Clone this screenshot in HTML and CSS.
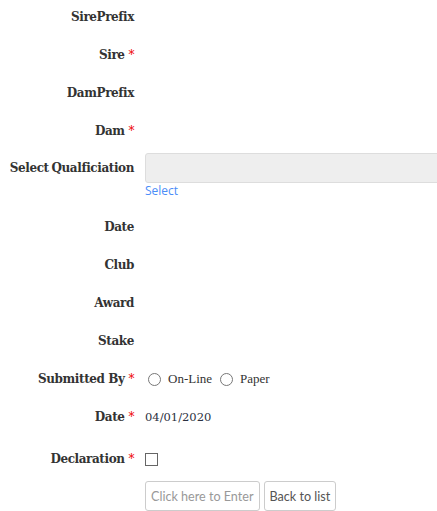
FILE: index.html
```html
<!DOCTYPE html>
<html lang="en">
<head>
    <meta charset="UTF-8">
    <meta name="viewport" content="width=device-width, initial-scale=1.0">
    <title>Qualification Entry</title>
    <link rel="stylesheet" href="styles.css">
</head>
<body>

<form class="entry-form">
    <div class="form-row">
        <label class="control-label">SirePrefix</label>
        <div class="field"></div>
    </div>
    <div class="form-row">
        <label class="control-label">Sire <span class="req">*</span></label>
        <div class="field"></div>
    </div>
    <div class="form-row">
        <label class="control-label">DamPrefix</label>
        <div class="field"></div>
    </div>
    <div class="form-row">
        <label class="control-label">Dam <span class="req">*</span></label>
        <div class="field"></div>
    </div>
    <div class="form-row qual-row">
        <label class="control-label">Select Qualficiation</label>
        <div class="field">
            <input type="text" class="form-control" readonly>
            <a href="#" class="help-link">Select</a>
        </div>
    </div>
    <div class="form-row">
        <label class="control-label">Date</label>
        <div class="field"></div>
    </div>
    <div class="form-row">
        <label class="control-label">Club</label>
        <div class="field"></div>
    </div>
    <div class="form-row">
        <label class="control-label">Award</label>
        <div class="field"></div>
    </div>
    <div class="form-row">
        <label class="control-label">Stake</label>
        <div class="field"></div>
    </div>
    <div class="form-row">
        <label class="control-label">Submitted By <span class="req">*</span></label>
        <div class="field radios">
            <label class="radio"><span class="circle"></span>On-Line</label>
            <label class="radio"><span class="circle"></span>Paper</label>
        </div>
    </div>
    <div class="form-row date-row">
        <label class="control-label">Date <span class="req">*</span></label>
        <div class="field value">04/01/2020</div>
    </div>
    <div class="form-row decl-row">
        <label class="control-label">Declaration <span class="req">*</span></label>
        <div class="field"><span class="checkbox"></span></div>
    </div>
    <div class="form-row">
        <div class="control-label"></div>
        <div class="field buttons">
            <button type="button" class="btn" disabled>Click here to Enter</button>
            <button type="button" class="btn">Back to list</button>
        </div>
    </div>
</form>

</body>
</html>
```

FILE: styles.css
```css
body {
    margin: 0;
    padding: 0;
    background: #fff;
    font-family: "DejaVu Serif", Georgia, serif;
    color: #333;
    overflow: hidden;
}
.entry-form {
    padding-top: 1px;
    overflow: hidden;
}
.form-row {
    display: flex;
    align-items: flex-start;
    min-height: 30px;
    margin-bottom: 8px;
}
.control-label {
    flex: 0 0 145px;
    box-sizing: border-box;
    padding: 7px 11px 0 0;
    text-align: right;
    font-size: 12px;
    font-weight: bold;
    line-height: 18px;
    letter-spacing: -0.4px;
    white-space: nowrap;
}
.req {
    color: #e00;
    font-weight: normal;
}
.field {
    flex: 1;
    min-width: 0;
}
/* the text box is wider than the window, its right end is cut off */
.qual-row .field {
    margin-right: -30px;
}
.qual-row .control-label {
    padding-top: 6px;
    word-spacing: -1px;
}
.form-control {
    display: block;
    box-sizing: border-box;
    width: 100%;
    height: 30px;
    background: #eee;
    border: 1px solid #ddd;
    border-radius: 3px;
    margin: 0;
}
.help-link {
    display: block;
    font-family: "Open Sans", sans-serif;
    font-size: 12px;
    line-height: 16px;
    color: #4b8df8;
    text-decoration: none;
    margin-bottom: 4px;
}
.radios {
    display: flex;
    align-items: center;
    gap: 8px;
    padding-top: 8px;
    padding-left: 3px;
    font-family: "Liberation Serif", serif;
    font-size: 13px;
}
.radio {
    display: flex;
    align-items: center;
}
.circle {
    width: 11px;
    height: 11px;
    border: 1px solid #777;
    border-radius: 50%;
    margin-right: 7px;
}
.date-row {
    margin-top: 2px;
}
.value {
    padding-top: 7px;
    line-height: 18px;
    font-size: 11.5px;
    color: #2b3040;
}
.decl-row {
    margin-top: 12px;
}
.checkbox {
    display: block;
    width: 11px;
    height: 11px;
    border: 1px solid #666;
    margin-top: 10px;
}
.buttons {
    display: flex;
    gap: 4px;
}
.btn {
    height: 30px;
    padding: 0 5px;
    background: #fff;
    border: 1px solid #ccc;
    border-radius: 3px;
    font-family: Lato, sans-serif;
    font-size: 12.6px;
    color: #555;
}
.btn:disabled {
    color: #999;
}
```
